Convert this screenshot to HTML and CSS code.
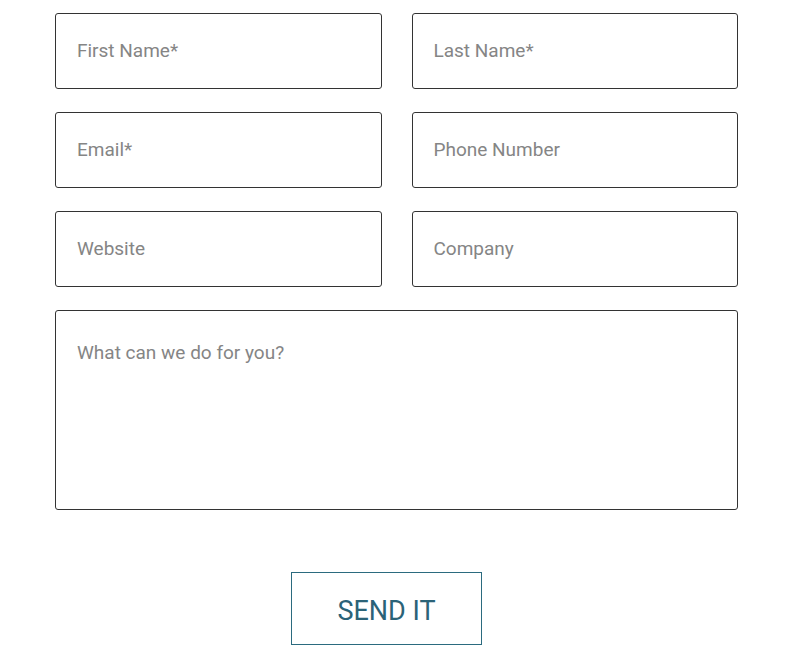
FILE: index.html
```html
<!DOCTYPE html>
<html>
<head>
<meta charset="utf-8">
<link rel="stylesheet" href="styles.css">
</head>
<body>
<form class="form">
  <div class="grid">
    <input class="field" type="text" placeholder="First Name*">
    <input class="field" type="text" placeholder="Last Name*">
    <input class="field" type="text" placeholder="Email*">
    <input class="field" type="text" placeholder="Phone Number">
    <input class="field" type="text" placeholder="Website">
    <input class="field" type="text" placeholder="Company">
    <textarea class="field message" placeholder="What can we do for you?"></textarea>
  </div>
  <div class="actions">
    <button class="send" type="button">SEND IT</button>
  </div>
</form>
</body>
</html>
```
FILE: styles.css
```css
html, body {
  margin: 0;
  padding: 0;
  background: #fff;
  font-family: Roboto, "Liberation Sans", sans-serif;
}
.form {
  width: 683px;
  margin: 13px 0 0 55px;
}
.grid {
  display: grid;
  grid-template-columns: 1fr 1fr;
  column-gap: 30px;
  row-gap: 23px;
}
.field {
  box-sizing: border-box;
  height: 76px;
  border: 1px solid #333;
  border-radius: 3px;
  padding: 0 21px 2px;
  font-family: Roboto, "Liberation Sans", sans-serif;
  font-size: 19px;
  color: #333;
  outline: none;
  background: #fff;
}
.field::placeholder {
  color: #858585;
  opacity: 1;
}
.message {
  grid-column: 1 / 3;
  height: 200px;
  padding: 30px 21px;
  resize: none;
  line-height: 24px;
}
.actions {
  display: flex;
  padding-left: 236px;
  margin-top: 62px;
}
.send {
  box-sizing: border-box;
  width: 191px;
  height: 73px;
  border: 1px solid #2b6b7f;
  border-radius: 0;
  background: #fff;
  color: #2b6378;
  font-family: Roboto, "Liberation Sans", sans-serif;
  font-size: 27px;
  font-weight: 400;
  padding: 4px 0 0;
  cursor: pointer;
}
```
